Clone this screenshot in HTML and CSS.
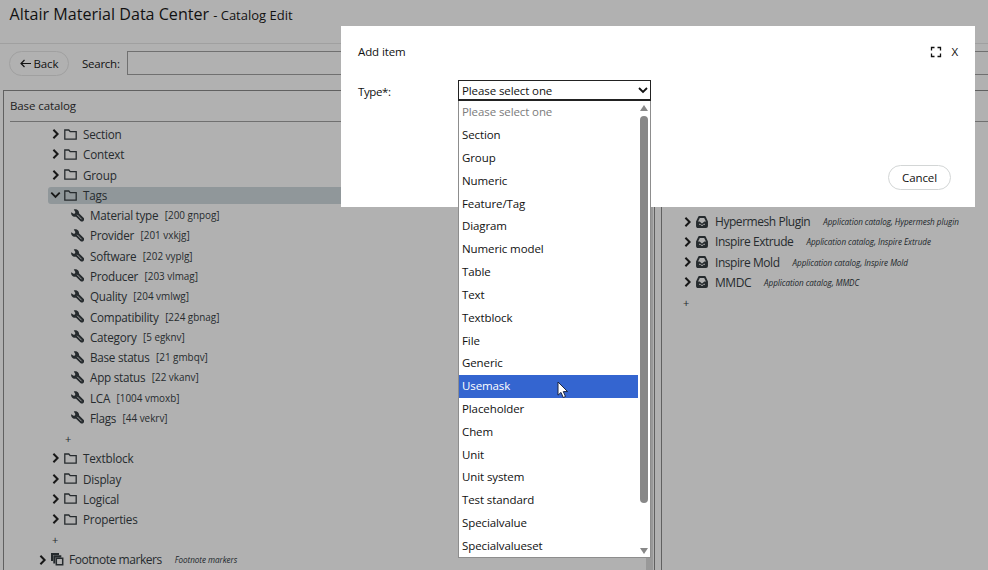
FILE: index.html
```html
<!DOCTYPE html>
<html lang="en">
<head>
<meta charset="utf-8">
<title>Altair Material Data Center - Catalog Edit</title>
<link rel="stylesheet" href="styles.css">
</head>
<body>
<svg class="defs" width="0" height="0" aria-hidden="true">
  <symbol id="chev" viewBox="0 0 8 12"><path d="M1.400 1.800 5.600 6 1.400 10.200" fill="none" stroke="currentColor" stroke-width="2"/></symbol>
  <symbol id="chevdown" viewBox="0 0 12 8"><path d="M1.400 1.400 6 6 10.600 1.400" fill="none" stroke="currentColor" stroke-width="2"/></symbol>
  <symbol id="folder" viewBox="0 0 13 11"><path d="M.8 1h4l1.400 1.700h6v7.500H.8z" fill="none" stroke="currentColor" stroke-width="1.300"/></symbol>
  <symbol id="wrench" viewBox="0 0 13 13"><path d="M2.800.6C4.500 0 6.700.6 7.500 2c.5.900.6 1.500.5 2.200l4.500 4.600c1 1 .8 2.300-.1 3.100-.9.900-2.200.8-3 0L5 7.700C3.300 8 1.500 7.300.6 5.900.1 5 0 4 .3 3.200l2.200 1.600 1.500-.4.300-1.500z" fill="currentColor"/><path d="m6.200 5.800 4.400 4.500" stroke="#a8a8a8" stroke-width=".9"/></symbol>
  <symbol id="copies" viewBox="0 0 13 13"><path d="M0 0h8v2H2v6H0z" fill="currentColor"/><path d="M2.300 2.300h8v2.200h-6v6h-2z" fill="currentColor"/><path d="M5.300 5.300h6.400v6.400H5.300z" fill="none" stroke="currentColor" stroke-width="1.500"/></symbol>
  <symbol id="inbox" viewBox="0 0 12 12"><path d="M3.200 1h5.600L11 5.600V10q0 1-1 1H2q-1 0-1-1V5.600z" fill="none" stroke="currentColor" stroke-width="1.900" stroke-linejoin="round"/><path d="M1 5.600h2.600L6 7.600l2.400-2H11V11H1z" fill="currentColor"/><path d="M3 8.300h1.200Q4.800 9.400 6 9.400t1.800-1.100H9" fill="none" stroke="#b1b1b1" stroke-width=".9"/></symbol>
</svg>

<div class="app">
  <header class="header"><span class="brand">Altair Material Data Center</span><span class="page">- Catalog Edit</span></header>
  <div class="toolbar">
    <div class="back"><svg width="11" height="9" viewBox="0 0 11 9"><path d="M11 4.500H1M4.500 1 1 4.500 4.500 8" fill="none" stroke="currentColor" stroke-width="1.200"/></svg><span>Back</span></div>
    <span class="search-label">Search:</span>
    <div class="search"></div>
  </div>
  <div class="panels">
    <section class="panel left">
      <div class="panel-head"><span>Base catalog</span></div>
      <div class="tree">
        <div class="row"><svg class="chev"><use href="#chev"/></svg><svg class="folder"><use href="#folder"/></svg><span>Section</span></div>
        <div class="row"><svg class="chev"><use href="#chev"/></svg><svg class="folder"><use href="#folder"/></svg><span>Context</span></div>
        <div class="row"><svg class="chev"><use href="#chev"/></svg><svg class="folder"><use href="#folder"/></svg><span>Group</span></div>
        <div class="row selected"><svg class="chevdown"><use href="#chevdown"/></svg><svg class="folder"><use href="#folder"/></svg><span>Tags</span></div>
        <div class="row tag"><svg class="wrench"><use href="#wrench"/></svg><span>Material type</span><small>[200 gnpog]</small></div>
        <div class="row tag"><svg class="wrench"><use href="#wrench"/></svg><span>Provider</span><small>[201 vxkjg]</small></div>
        <div class="row tag"><svg class="wrench"><use href="#wrench"/></svg><span>Software</span><small>[202 vyplg]</small></div>
        <div class="row tag"><svg class="wrench"><use href="#wrench"/></svg><span>Producer</span><small>[203 vlmag]</small></div>
        <div class="row tag"><svg class="wrench"><use href="#wrench"/></svg><span>Quality</span><small>[204 vmlwg]</small></div>
        <div class="row tag"><svg class="wrench"><use href="#wrench"/></svg><span>Compatibility</span><small>[224 gbnag]</small></div>
        <div class="row tag"><svg class="wrench"><use href="#wrench"/></svg><span>Category</span><small>[5 egknv]</small></div>
        <div class="row tag"><svg class="wrench"><use href="#wrench"/></svg><span>Base status</span><small>[21 gmbqv]</small></div>
        <div class="row tag"><svg class="wrench"><use href="#wrench"/></svg><span>App status</span><small>[22 vkanv]</small></div>
        <div class="row tag"><svg class="wrench"><use href="#wrench"/></svg><span>LCA</span><small>[1004 vmoxb]</small></div>
        <div class="row tag"><svg class="wrench"><use href="#wrench"/></svg><span>Flags</span><small>[44 vekrv]</small></div>
        <div class="row add inner">+</div>
        <div class="row"><svg class="chev"><use href="#chev"/></svg><svg class="folder"><use href="#folder"/></svg><span>Textblock</span></div>
        <div class="row"><svg class="chev"><use href="#chev"/></svg><svg class="folder"><use href="#folder"/></svg><span>Display</span></div>
        <div class="row"><svg class="chev"><use href="#chev"/></svg><svg class="folder"><use href="#folder"/></svg><span>Logical</span></div>
        <div class="row"><svg class="chev"><use href="#chev"/></svg><svg class="folder"><use href="#folder"/></svg><span>Properties</span></div>
        <div class="row add">+</div>
        <div class="row top"><svg class="chev"><use href="#chev"/></svg><svg class="copies"><use href="#copies"/></svg><span>Footnote markers</span><em>Footnote markers</em></div>
      </div>
      <div class="panel-scroll"></div>
    </section>
    <section class="panel right">
      <div class="panel-head"></div>
      <div class="tree">
        <div class="row"><svg class="chev"><use href="#chev"/></svg><svg class="inbox"><use href="#inbox"/></svg><span>Hypermesh Plugin</span><em>Application catalog, Hypermesh plugin</em></div>
        <div class="row"><svg class="chev"><use href="#chev"/></svg><svg class="inbox"><use href="#inbox"/></svg><span>Inspire Extrude</span><em>Application catalog, Inspire Extrude</em></div>
        <div class="row"><svg class="chev"><use href="#chev"/></svg><svg class="inbox"><use href="#inbox"/></svg><span>Inspire Mold</span><em>Application catalog, Inspire Mold</em></div>
        <div class="row"><svg class="chev"><use href="#chev"/></svg><svg class="inbox"><use href="#inbox"/></svg><span>MMDC</span><em>Application catalog, MMDC</em></div>
        <div class="row add">+</div>
      </div>
    </section>
  </div>
</div>

<div class="dialog">
  <div class="dialog-head">
    <span>Add item</span>
    <svg class="expand" width="12" height="12" viewBox="0 0 12 12"><path d="M1.500 4.500v-3h3M7.500 1.500h3v3M10.500 7.500v3h-3M4.500 10.500h-3v-3" fill="none" stroke="currentColor" stroke-width="1.300"/></svg>
    <span class="close">X</span>
  </div>
  <div class="field">
    <label>Type*:</label>
    <div class="select"><span>Please select one</span><svg width="10" height="7" viewBox="0 0 10 7"><path d="m1 1 4 4 4-4" fill="none" stroke="currentColor" stroke-width="1.800"/></svg></div>
  </div>
  <div class="actions"><div class="cancel">Cancel</div></div>
</div>

<div class="menu">
  <div class="options">
    <div class="placeholder">Please select one</div>
    <div>Section</div>
    <div>Group</div>
    <div>Numeric</div>
    <div>Feature/Tag</div>
    <div>Diagram</div>
    <div>Numeric model</div>
    <div>Table</div>
    <div>Text</div>
    <div>Textblock</div>
    <div>File</div>
    <div>Generic</div>
    <div class="active">Usemask</div>
    <div>Placeholder</div>
    <div>Chem</div>
    <div>Unit</div>
    <div>Unit system</div>
    <div>Test standard</div>
    <div>Specialvalue</div>
    <div>Specialvalueset</div>
  </div>
  <div class="scrollbar"><i class="up"></i><i class="thumb"></i><i class="down"></i></div>
</div>
<svg class="cursor" width="12" height="18" viewBox="0 0 12 18"><path d="M1 1v13.200l3-2.800 2.200 5.100 2.300-1-2.200-4.900h4.300z" fill="#fff" stroke="#1a2440" stroke-width="1"/></svg>
</body>
</html>
```
FILE: styles.css
```css
* { box-sizing: border-box; }
body { margin: 0; width: 988px; height: 570px; overflow: hidden; background: #b1b1b1; color: #111; font: 11.500px "Open Sans", "Noto Sans", sans-serif; letter-spacing: -.1px; position: relative; }
.defs { position: absolute; }
svg { flex: none; }
span, small, em, label { white-space: nowrap; }
.app { height: 570px; display: flex; flex-direction: column; }
.header { height: 44px; flex: none; border-bottom: 1px solid #a0a0a0; padding: 3px 0 0 9.500px; display: flex; align-items: baseline; gap: 4px; line-height: 22px; }
.brand { font-size: 16.100px; letter-spacing: 0; }
.page { font-size: 13px; letter-spacing: 0; }
.toolbar { height: 46px; flex: none; display: flex; align-items: flex-start; padding: 7px 0 0 9px; }
.back { width: 60px; height: 25px; border: 1px solid #a0a0a0; border-radius: 13px; display: flex; align-items: center; justify-content: center; gap: 3px; }
.search-label { width: 45px; margin-left: 13px; line-height: 25px; letter-spacing: -.25px; }
.search { flex: 1; height: 24px; border: 1px solid #707070; margin-right: -2px; }
.panels { flex: 1; min-height: 0; display: flex; gap: 6px; padding-left: 3px; }
.panel { border: 1px solid #606060; border-bottom: 0; position: relative; overflow: hidden; }
.left { width: 652px; flex: none; }
.right { flex: 1; border-right: 0; }
.panel-head { height: 31px; margin-left: 6px; border-bottom: 1px solid #707070; line-height: 30px; color: #222; }
.tree { padding-top: 2px; color: #262b2e; }
.row { height: 20.270px; display: flex; align-items: center; padding-left: 48px; font-size: 11.700px; letter-spacing: -.2px; }
.row .folder { width: 13px; height: 11px; margin: 0 6px 0 4px; }
.chev { width: 8px; height: 12px; color: #181818; }
.chevdown { width: 11px; height: 8px; margin-left: -2px; margin-right: -1px; color: #181818; }
.selected { background: #90979a; height: 17px; margin: 2px 0 1.270px 44px; padding-left: 4px; border-radius: 3px 0 0 3px; }
.tag { padding-left: 67px; letter-spacing: -.260px; }
.wrench { width: 13px; height: 13px; margin-right: 6px; }
small { font-size: 9.900px; margin-left: 6.500px; letter-spacing: 0; }
.add { padding-left: 48px; font-size: 11px; }
.inner { padding-left: 61px; }
.top { padding-left: 35px; font-size: 12px; letter-spacing: -.450px; }
.copies { width: 13px; height: 13px; margin: 0 5px 0 4px; }
em { font-size: 8.100px; margin-left: 13px; color: #20262a; letter-spacing: -.050px; }
.panel-scroll { position: absolute; right: 1px; top: 32px; bottom: 0; width: 7px; background: #999; }
.right .panel-head { margin-left: 7px; }
.right .tree { padding-top: 89.500px; }
.right .row { padding-left: 22px; font-size: 12px; letter-spacing: -.450px; }
.right .row em { letter-spacing: -.050px; }
.right .add { font-size: 11px; padding-left: 21px; }
.inbox { width: 12px; height: 12px; margin: 0 7px 0 4px; }
.dialog { position: absolute; left: 341px; top: 26px; width: 634px; height: 181px; background: #fff; padding: 16px 17px 17px 17px; display: flex; flex-direction: column; }
.dialog-head { height: 19px; display: flex; align-items: center; }
.expand { margin-left: auto; margin-right: 9px; }
.field { display: flex; margin-top: 19px; }
.field label { width: 100px; line-height: 24px; letter-spacing: -.4px; }
.select { width: 193px; height: 21px; border: 1px solid #222; border-bottom-width: 2px; display: flex; align-items: center; justify-content: space-between; padding: 0 2px 0 3px; }
.actions { margin-top: auto; display: flex; justify-content: flex-end; padding-right: 7px; }
.cancel { width: 63px; height: 25px; border: 1px solid #d3d6d6; border-radius: 13px; text-align: center; line-height: 23px; }
.menu { position: absolute; left: 458px; top: 101px; width: 193px; height: 457px; background: #fff; border: 1px solid #8d8d8d; border-top: 0; display: flex; }
.options { width: 179px; padding-top: .4px; }
.options div { height: 22.820px; line-height: 22.820px; padding-left: 3px; white-space: nowrap; }
.options .placeholder { color: #7b7b7b; }
.options .active { background: #3465d0; color: #fff; }
.scrollbar { flex: 1; display: flex; flex-direction: column; align-items: center; padding: 4px 0 3px; }
.up, .down { border: 4.500px solid transparent; height: 0; }
.up { border-top: 0; border-bottom: 6px solid #888; }
.down { border-bottom: 0; border-top: 6px solid #888; margin-top: auto; }
.thumb { width: 8px; height: 387px; margin-top: 5px; border-radius: 4px; background: #888; }
.cursor { position: absolute; left: 557px; top: 381px; }
```
